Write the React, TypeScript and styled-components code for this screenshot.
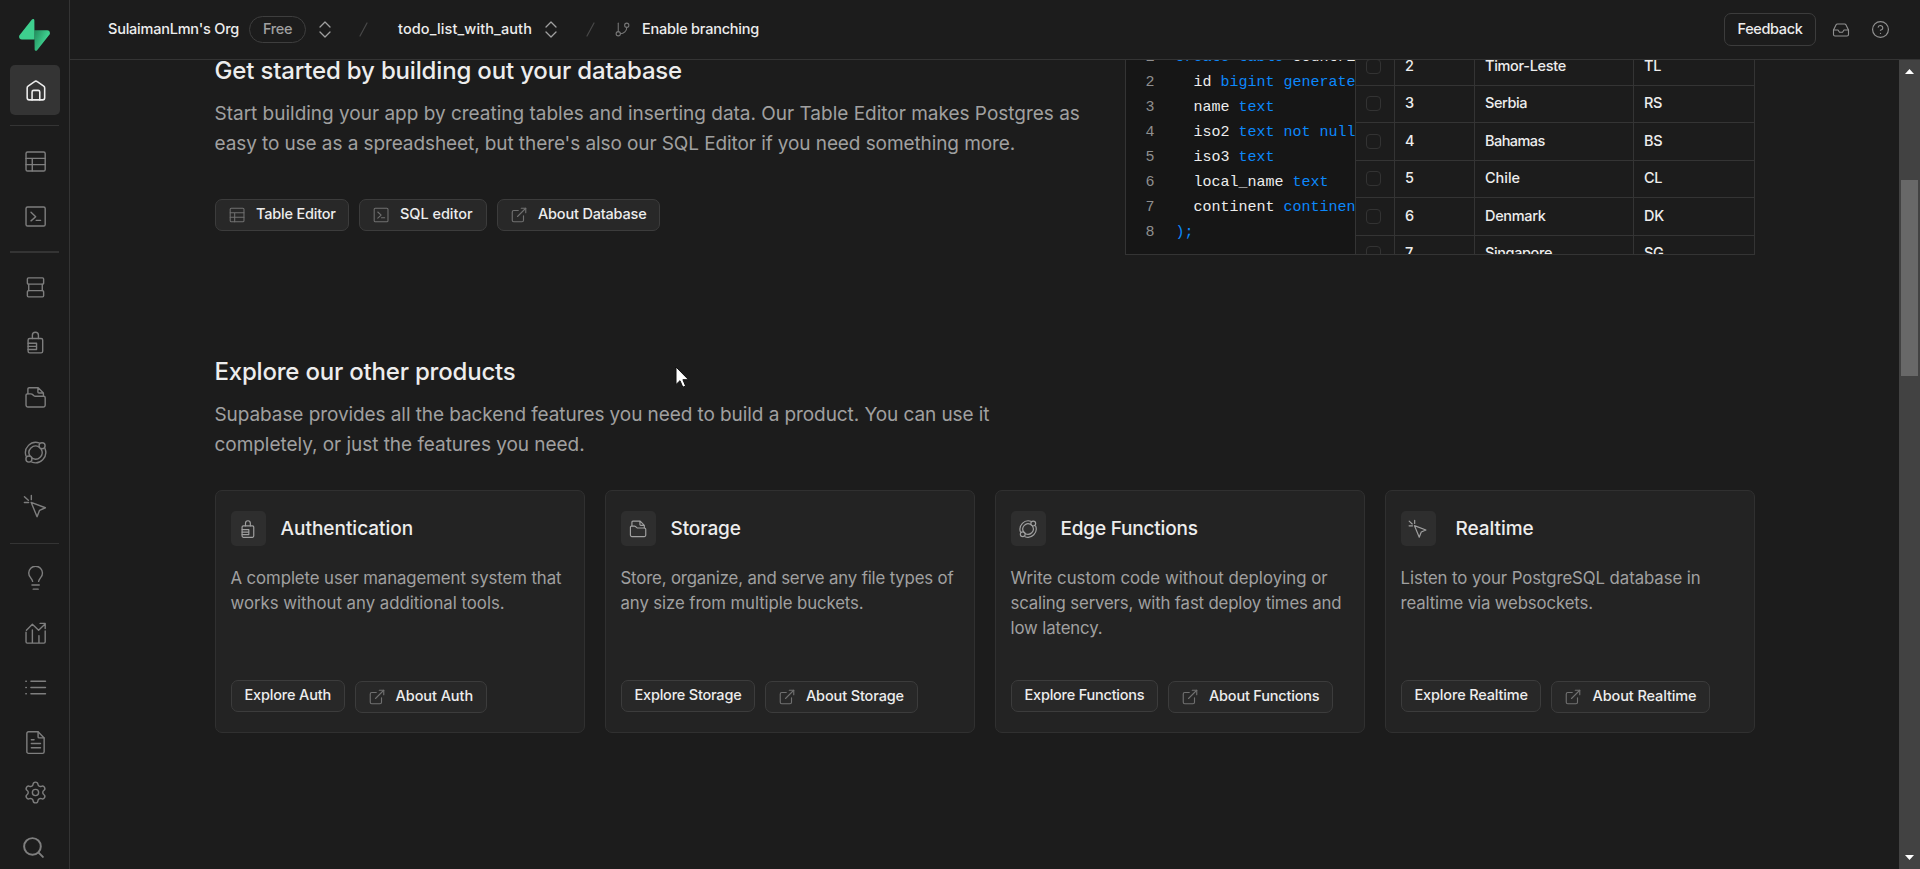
import React from 'react';
import styled, { createGlobalStyle } from 'styled-components';
import { ExternalLink, GitBranch, HelpCircle, Inbox, Search, Settings } from 'lucide-react';

const color = {
  bg: '#1c1c1c',
  panel: '#232323',
  code: '#161616',
  line: '#343434',
  soft: '#2e2e2e',
  button: '#282828',
  buttonLine: '#3c3c3c',
  text: '#ededed',
  muted: '#a0a0a0',
  icon: '#7e7e7e',
  blue: '#0c88fb',
};

const GlobalStyle = createGlobalStyle`
  * { box-sizing: border-box; }
  body {
    margin: 0;
    background: ${color.bg};
    color: ${color.text};
    font-family: Inter, "Liberation Sans", sans-serif;
    overflow: hidden;
  }
  h2, h3, p { margin: 0; }
`;

/* ---------- text ---------- */

const Label = styled.span<{ $track?: number }>`
  font-size: 14.5px;
  line-height: 20px;
  font-weight: 500;
  letter-spacing: ${(p) => p.$track ?? -0.15}px;
  white-space: nowrap;
`;

const Heading = styled.h2<{ $track: number }>`
  margin-left: -0.5px;
  font-size: 24px;
  line-height: 32px;
  font-weight: 450;
  letter-spacing: ${(p) => p.$track}px;
  white-space: nowrap;
`;

const Lead = styled.p`
  margin: 12px 0 0 -0.5px;
  font-size: 19px;
  line-height: 30px;
  color: ${color.muted};
`;

const Line = styled.span<{ $track: number }>`
  display: block;
  letter-spacing: ${(p) => p.$track}px;
  white-space: nowrap;
`;

/* ---------- icons ---------- */

const Glyph = styled.svg.attrs({
  viewBox: '0 0 24 24',
  fill: 'none',
  stroke: 'currentColor',
  strokeLinecap: 'round',
  strokeLinejoin: 'round',
})<{ $size?: number; $weight?: number }>`
  display: block;
  flex: none;
  width: ${(p) => p.$size ?? 25}px;
  height: ${(p) => p.$size ?? 25}px;
  stroke-width: ${(p) => p.$weight ?? 1.35};
`;

type IconProps = { size?: number; weight?: number };
type IconType = (p: IconProps) => React.ReactElement;

const icon = (body: React.ReactNode): IconType => ({ size, weight }) => (
  <Glyph $size={size} $weight={weight}>{body}</Glyph>
);

const HomeIcon = icon(
  <>
    <path d="M4 9.6a2.2 2.2 0 0 1 .9-1.8l6.2-4.3a2.2 2.2 0 0 1 2.6 0l6.2 4.3a2.2 2.2 0 0 1 .9 1.8V19a2 2 0 0 1-2 2H6a2 2 0 0 1-2-2Z" />
    <path d="M8.7 21v-7.6a1.5 1.5 0 0 1 1.5-1.5h4.400a1.500 1.500 0 0 1 1.500 1.500V21" />
  </>,
);
const TableIcon = icon(
  <>
    <rect x="2.9" y="2.9" width="18.4" height="18.2" rx="1.5" />
    <path d="M2.9 9h18.4M2.9 15h18.4M8.9 9v12" />
  </>,
);
const SqlIcon = icon(
  <>
    <rect x="2.9" y="2.9" width="18.4" height="18.2" rx="1.5" />
    <path d="M7.7 8l4.5 4.2-4.5 4M12.6 15.7h4.3" />
  </>,
);
const DatabaseIcon = icon(
  <>
    <rect x="4.2" y="2.8" width="15.6" height="6" rx="1" />
    <path d="M5.5 8.8v6.2M18.5 8.8v6.2" />
    <rect x="4.2" y="15" width="15.6" height="6" rx="1" />
  </>,
);
const AuthIcon = icon(
  <>
    <rect x="4.9" y="8.2" width="14" height="13.8" rx="1.5" />
    <path d="M9 8.2V5a2.9 2.9 0 0 1 5.8 0v3.2M4.9 12.700h8.100v6H4.900M4.900 15.700H13" />
  </>,
);
const StorageIcon = icon(
  <>
    <path d="M2.9 9.700a1.200 1.200 0 0 1 1.200-1.200h3.600a2 2 0 0 1 1.300.500l1.500 1.300a2 2 0 0 0 1.300.500h8a1.500 1.500 0 0 1 1.500 1.500v7a1.800 1.800 0 0 1-1.800 1.800H4.700a1.800 1.800 0 0 1-1.800-1.800Z" />
    <path d="M4.700 8.400V3.800a1.200 1.200 0 0 1 1.200-1.200h8.700l5 5v3.200M14.300 2.800v3.900a1 1 0 0 0 1 1h4" />
  </>,
);
const FunctionsIcon = icon(
  <>
    <path d="M15.500 2.700a10 10 0 0 0-12.600 12.700M8.500 21.300A10 10 0 0 0 21.200 8.400" />
    <path d="M15.300 6.700a6.300 6.300 0 0 0-8.600 8.700M8.600 17.300a6.300 6.300 0 0 0 8.800-8.600" />
    <circle cx="18.3" cy="5.5" r="2.9" />
    <circle cx="5.7" cy="18.3" r="2.9" />
  </>,
);
const RealtimeIcon = icon(
  <path d="M7.800 8l13.700 5.200-5.600 2.500-2.400 6.100ZM1.400 2.600l3.700 3.400M8 1.500v3.900M1.300 8.200h4.100" />,
);
const BulbIcon = icon(
  <path d="M9.200 14.700c-.300-1.500-.900-2.200-1.800-3.300a6.600 6.600 0 1 1 9.400 0c-.900 1.100-1.500 1.800-1.800 3.300M8.600 18.200h7M9.800 22.200h4.800" />,
);
const ReportsIcon = icon(
  <>
    <path d="M2.900 10.800V20a1.200 1.200 0 0 0 1.200 1.200h16a1.200 1.200 0 0 0 1.200-1.200V9.500M9 8.600v12.500M15.300 14v7.100" />
    <path d="M3.300 8.800L9 3.200l6 5.600 6.200-5.900M16.400 2.300h4.900v5" />
  </>,
);
const LogsIcon = icon(<path d="M7.600 6h14M7.600 12h14M7.600 18h14M2.700 6h.500M2.700 12h.500M2.700 18h.500" />);
const DocsIcon = icon(
  <>
    <path d="M14.500 1.700H5.300a1.600 1.600 0 0 0-1.600 1.600v17.500a1.600 1.600 0 0 0 1.600 1.600h13.400a1.600 1.600 0 0 0 1.600-1.600V7.600Z" />
    <path d="M14.500 1.800v4.800a1 1 0 0 0 1 1h4.700M8 9.300h2.600M8 13h8.800M8 17h8.800" />
  </>,
);

const Logo = () => (
  <svg width="31" height="32" viewBox="0 0 109 113" fill="none">
    <defs>
      <linearGradient id="leaf" x1="54" y1="55" x2="94" y2="72" gradientUnits="userSpaceOnUse">
        <stop stopColor="#249361" />
        <stop offset="1" stopColor="#3ECF8E" />
      </linearGradient>
    </defs>
    <path
      d="M63.708 110.284c-2.860 3.601-8.658 1.628-8.727-2.970l-1.007-67.251h45.220c8.190 0 12.758 9.460 7.665 15.874L63.708 110.284Z"
      fill="url(#leaf)"
    />
    <path
      d="M45.317 2.071c2.860-3.601 8.657-1.628 8.726 2.970l.442 67.251H9.831c-8.190 0-12.759-9.460-7.665-15.875L45.317 2.071Z"
      fill="#3ECF8E"
    />
  </svg>
);

/* ---------- shell ---------- */

const Shell = styled.div`
  display: flex;
  width: 1920px;
  height: 869px;
  overflow: hidden;
`;

const Sidebar = styled.nav`
  display: flex;
  flex-direction: column;
  flex: none;
  width: 70px;
  padding-left: 10px;
  border-right: 1px solid ${color.line};
`;

const LogoSlot = styled.div`
  flex: none;
  height: 65px;
  padding: 19px 0 0 9px;
`;

const NavGroup = styled.div`
  display: flex;
  flex-direction: column;
  flex: none;
  gap: 4.7px;
`;

const NavItem = styled.a<{ $active?: boolean }>`
  display: flex;
  align-items: center;
  justify-content: center;
  flex: none;
  width: 50px;
  height: 50px;
  padding-left: 1px;
  border-radius: 5px;
  color: ${(p) => (p.$active ? color.text : color.icon)};
  background: ${(p) => (p.$active ? '#343434' : 'transparent')};
`;

const SearchItem = styled(NavItem)`
  padding: 0 4px 0 0;
  margin-top: 5px;
`;

const Divider = styled.div<{ $thick?: boolean; $top: number; $bottom: number }>`
  flex: none;
  width: 49px;
  height: ${(p) => (p.$thick ? 2 : 1)}px;
  margin: ${(p) => p.$top}px 0 ${(p) => p.$bottom}px;
  background: ${color.line};
`;

const Page = styled.div`
  display: flex;
  flex-direction: column;
  flex: 1;
  min-width: 0;
`;

const Header = styled.header`
  display: flex;
  align-items: center;
  flex: none;
  height: 60px;
  padding: 0 30px 1px 38px;
  border-bottom: 1px solid ${color.line};
`;

const Crumb = styled.div<{ $width: number }>`
  display: flex;
  align-items: center;
  flex: none;
  width: ${(p) => p.$width}px;
`;

const PlanBadge = styled.span`
  display: flex;
  align-items: center;
  justify-content: center;
  width: 57px;
  height: 27px;
  margin: 0 13px 0 10px;
  padding-bottom: 1px;
  border: 1px solid #3e3e3e;
  border-radius: 14px;
  color: ${color.muted};
`;

const Switcher = styled.svg`
  flex: none;
  width: 12px;
  height: 17px;
  margin-top: 1px;
  fill: none;
  stroke: #a0a0a0;
  stroke-width: 1.3;
  stroke-linecap: round;
  stroke-linejoin: round;
`;

const Slash = styled.svg<{ $after: number }>`
  flex: none;
  width: 9px;
  height: 15px;
  margin: 1px ${(p) => p.$after}px 0 0;
  stroke: #484848;
  stroke-width: 1.2;
  stroke-linecap: round;
`;

const ProjectLabel = styled(Label)`
  margin-right: 13px;
`;

const Branching = styled.div`
  display: flex;
  align-items: center;
  gap: 11px;
  svg { color: #777; }
`;

const Actions = styled.div`
  display: flex;
  align-items: center;
  gap: 15px;
  margin-left: auto;
  color: #909090;
`;

const Feedback = styled.button`
  width: 92px;
  height: 33px;
  padding: 0;
  border: 1px solid #3c3c3c;
  border-radius: 7px;
  background: transparent;
  color: ${color.text};
  font-family: inherit;
`;

const IconSlot = styled.span`
  display: flex;
  justify-content: center;
  width: 19px;
  margin-right: 6px;
  padding-top: 1px;
  &:last-child { margin-right: 0; }
`;

const Body = styled.div`
  display: flex;
  flex: 1;
  min-height: 0;
`;

const Scroller = styled.main`
  flex: 1;
  overflow: hidden;
  padding-left: 145px;
`;

const ScrollTrack = styled.div`
  display: flex;
  flex-direction: column;
  align-items: center;
  flex: none;
  width: 21px;
  padding: 9px 0;
  background: #424242;
`;

const ScrollThumb = styled.div`
  width: 17px;
  height: 196px;
  margin: 106px 0 auto;
  background: #686868;
`;

const Arrow = styled.svg`
  width: 9px;
  height: 5px;
  fill: #fff;
`;

/* ---------- database section ---------- */

const Intro = styled.section`
  display: flex;
  justify-content: space-between;
  width: 1540px;
  height: 195px;
`;

const IntroText = styled.div`
  & > h2 { margin-top: -5px; }
`;

const ButtonRow = styled.div<{ $top?: number }>`
  display: flex;
  gap: 10px;
  margin-top: ${(p) => p.$top ?? 0}px;
`;

const Button = styled.button<{ $drop?: number; $width?: number }>`
  display: flex;
  align-items: center;
  gap: 10px;
  width: ${(p) => (p.$width ? `${p.$width}px` : 'auto')};
  height: 32px;
  margin-top: ${(p) => p.$drop ?? 0}px;
  padding: 0 12.5px 2px;
  border: 1px solid ${color.buttonLine};
  border-radius: 7px;
  background: ${color.button};
  color: ${color.text};
  font-family: inherit;
  svg {
    flex: none;
    margin: 2px 0 0 -0.5px;
    color: #707070;
  }
`;

const Preview = styled.div`
  display: flex;
  width: 630px;
  border: 1px solid ${color.line};
  border-top: 0;
  overflow: hidden;
`;

const Code = styled.pre`
  flex: none;
  width: 229px;
  margin: -15px 0 0;
  padding-left: 19.5px;
  overflow: hidden;
  background: ${color.code};
  font: 15px/25px "Liberation Mono", monospace;
`;

const CodeLine = styled.div`
  display: flex;
  height: 25px;
`;

const LineNo = styled.span`
  flex: none;
  width: 30px;
  color: #8f8f8f;
`;

const Keyword = styled.span`
  color: ${color.blue};
`;

const Grid = styled.div`
  display: grid;
  grid-template-columns: 39px 80px 159px 121px;
  grid-auto-rows: 37.5px;
  flex: 1;
  margin-top: -12px;
  border-left: 1px solid ${color.line};
`;

const Cell = styled.div<{ $last?: boolean }>`
  display: flex;
  align-items: center;
  padding: 0 0 1px 10px;
  border-right: ${(p) => (p.$last ? '0' : `1px solid ${color.line}`)};
  border-bottom: 1px solid ${color.line};
`;

const Checkbox = styled.i`
  width: 15px;
  height: 15px;
  margin-top: 1px;
  border: 1px solid #333;
  border-radius: 4px;
`;

/* ---------- products section ---------- */

const Products = styled.section`
  margin-top: 101px;
`;

const CardRow = styled.div`
  display: grid;
  grid-template-columns: repeat(4, 370px);
  gap: 20px;
  margin-top: 30px;
`;

const Card = styled.article`
  display: flex;
  flex-direction: column;
  height: 243px;
  padding: 20px 15px 19px;
  border: 1px solid #303030;
  border-radius: 7px;
  background: ${color.panel};
`;

const CardHead = styled.div<{ $gap: number }>`
  display: flex;
  align-items: center;
  gap: ${(p) => p.$gap}px;
  height: 35px;
`;

const IconTile = styled.span`
  display: flex;
  align-items: center;
  justify-content: center;
  width: 35px;
  height: 35px;
  padding-right: 1px;
  border-radius: 5px;
  background: ${color.soft};
  color: #a0a0a0;
`;

const CardTitle = styled.h3<{ $track: number }>`
  padding-top: 1px;
  margin-left: -0.5px;
  font-size: 19px;
  line-height: 28px;
  font-weight: 500;
  letter-spacing: ${(p) => p.$track}px;
`;

const CardText = styled.p`
  flex: 1;
  margin: 20px 0 0 -0.5px;
  font-size: 16.8px;
  line-height: 25px;
  color: ${color.muted};
`;

const Pointer = styled.svg`
  position: absolute;
  left: 675px;
  top: 366px;
  width: 15px;
  height: 23px;
`;

/* ---------- data ---------- */

const code: [string, string][] = [
  ['', 'create table |countries ('],
  ['  id ', 'bigint generated by default'],
  ['  name ', 'text'],
  ['  iso2 ', 'text not null,'],
  ['  iso3 ', 'text'],
  ['  local_name ', 'text'],
  ['  continent ', 'continents'],
  ['', ');'],
];

const countries: [string, string, string, number][] = [
  ['2', 'Timor-Leste', 'TL', -0.3],
  ['3', 'Serbia', 'RS', -0.4],
  ['4', 'Bahamas', 'BS', -0.55],
  ['5', 'Chile', 'CL', -0.04],
  ['6', 'Denmark', 'DK', -0.32],
  ['7', 'Singapore', 'SG', -0.39],
];

type Product = {
  title: string;
  track: number;
  gap?: number;
  Icon: IconType;
  lines: [string, number][];
  explore: [string, number];
  about: [string, number];
};

const products: Product[] = [
  {
    title: 'Authentication',
    track: 0,
    Icon: AuthIcon,
    lines: [
      ['A complete user management system that', -0.09],
      ['works without any additional tools.', -0.01],
    ],
    explore: ['Explore Auth', -0.17],
    about: ['About Auth', -0.07],
  },
  {
    title: 'Storage',
    track: -0.1,
    Icon: StorageIcon,
    lines: [
      ['Store, organize, and serve any file types of', -0.16],
      ['any size from multiple buckets.', -0.1],
    ],
    explore: ['Explore Storage', -0.21],
    about: ['About Storage', -0.13],
  },
  {
    title: 'Edge Functions',
    track: -0.2,
    Icon: FunctionsIcon,
    lines: [
      ['Write custom code without deploying or', 0.02],
      ['scaling servers, with fast deploy times and', -0.16],
      ['low latency.', -0.13],
    ],
    explore: ['Explore Functions', -0.22],
    about: ['About Functions', -0.18],
  },
  {
    title: 'Realtime',
    track: -0.05,
    gap: 20,
    Icon: RealtimeIcon,
    lines: [
      ['Listen to your PostgreSQL database in', -0.08],
      ['realtime via websockets.', -0.14],
    ],
    explore: ['Explore Realtime', -0.15],
    about: ['About Realtime', -0.1],
  },
];

/* ---------- parts ---------- */

const UpDown = () => (
  <Switcher viewBox="0 0 12 17">
    <path d="M1 6L6 1l5 5M1 11l5 5 5-5" />
  </Switcher>
);

const SlashMark = ({ after }: { after: number }) => (
  <Slash viewBox="0 0 9 15" $after={after}>
    <path d="M8 1L1 14" />
  </Slash>
);

const NavList = ({ icons }: { icons: IconType[] }) => (
  <NavGroup>
    {icons.map((Icon, i) => (
      <NavItem key={i}>
        <Icon />
      </NavItem>
    ))}
  </NavGroup>
);

const CodeText = ({ value }: { value: string }) => {
  const [keyword, rest] = value.split('|');
  return (
    <>
      <Keyword>{keyword}</Keyword>
      {rest}
    </>
  );
};

export default function App() {
  return (
    <Shell>
      <GlobalStyle />
      <Sidebar>
        <LogoSlot>
          <Logo />
        </LogoSlot>
        <NavItem $active>
          <HomeIcon weight={1.5} />
        </NavItem>
        <Divider $top={10} $bottom={10.5} />
        <NavList icons={[TableIcon, SqlIcon]} />
        <Divider $thick $top={9.800} $bottom={10} />
        <NavList icons={[DatabaseIcon, AuthIcon, StorageIcon, FunctionsIcon, RealtimeIcon]} />
        <Divider $top={11.2} $bottom={9.5} />
        <NavList icons={[BulbIcon, ReportsIcon, LogsIcon, DocsIcon]} />
        <NavItem>
          <Settings size={25} strokeWidth={1.35} />
        </NavItem>
        <SearchItem>
          <Search size={25} strokeWidth={1.9} />
        </SearchItem>
      </Sidebar>

      <Page>
        <Header>
          <Crumb $width={251}>
            <Label $track={-0.22}>SulaimanLmn's Org</Label>
            <PlanBadge>
              <Label $track={-0.3}>Free</Label>
            </PlanBadge>
            <UpDown />
          </Crumb>
          <SlashMark after={30} />
          <Crumb $width={188}>
            <ProjectLabel $track={0.11}>todo_list_with_auth</ProjectLabel>
            <UpDown />
          </Crumb>
          <SlashMark after={19} />
          <Branching>
            <GitBranch size={17} strokeWidth={1.5} />
            <Label $track={-0.23}>Enable branching</Label>
          </Branching>
          <Actions>
            <Feedback>
              <Label $track={-0.35}>Feedback</Label>
            </Feedback>
            <IconSlot>
              <Inbox size={18} strokeWidth={1.5} />
            </IconSlot>
            <IconSlot>
              <HelpCircle size={19} strokeWidth={1.5} />
            </IconSlot>
          </Actions>
        </Header>

        <Body>
          <Scroller>
            <Intro>
              <IntroText>
                <Heading $track={-0.17}>Get started by building out your database</Heading>
                <Lead>
                  <Line $track={-0.01}>
                    Start building your app by creating tables and inserting data. Our Table Editor makes Postgres as
                  </Line>
                  <Line $track={-0.09}>
                    easy to use as a spreadsheet, but there's also our SQL Editor if you need something more.
                  </Line>
                </Lead>
                <ButtonRow $top={40}>
                  <Button $width={134}>
                    <TableIcon size={18} weight={1.4} />
                    <Label $track={-0.2}>Table Editor</Label>
                  </Button>
                  <Button $width={128}>
                    <SqlIcon size={18} weight={1.4} />
                    <Label $track={-0.04}>SQL editor</Label>
                  </Button>
                  <Button $width={163}>
                    <ExternalLink size={18} strokeWidth={1.5} />
                    <Label $track={-0.19}>About Database</Label>
                  </Button>
                </ButtonRow>
              </IntroText>
              <Preview>
                <Code>
                  {code.map(([name, rest], i) => (
                    <CodeLine key={i}>
                      <LineNo>{i + 1}</LineNo>
                      <span>
                        {name}
                        <CodeText value={rest} />
                      </span>
                    </CodeLine>
                  ))}
                </Code>
                <Grid>
                  {countries.map(([id, name, iso, track]) => (
                    <React.Fragment key={id}>
                      <Cell>
                        <Checkbox />
                      </Cell>
                      <Cell>
                        <Label>{id}</Label>
                      </Cell>
                      <Cell>
                        <Label $track={track}>{name}</Label>
                      </Cell>
                      <Cell $last>
                        <Label $track={-0.33}>{iso}</Label>
                      </Cell>
                    </React.Fragment>
                  ))}
                </Grid>
              </Preview>
            </Intro>

            <Products>
              <Heading $track={-0.2}>Explore our other products</Heading>
              <Lead>
                <Line $track={-0.08}>
                  Supabase provides all the backend features you need to build a product. You can use it
                </Line>
                <Line $track={-0.04}>completely, or just the features you need.</Line>
              </Lead>
              <CardRow>
                {products.map(({ title, track, gap, Icon, lines, explore, about }) => (
                  <Card key={title}>
                    <CardHead $gap={gap ?? 15}>
                      <IconTile>
                        <Icon size={20} weight={1.4} />
                      </IconTile>
                      <CardTitle $track={track}>{title}</CardTitle>
                    </CardHead>
                    <CardText>
                      {lines.map(([text, t]) => (
                        <Line key={text} $track={t}>
                          {text}
                        </Line>
                      ))}
                    </CardText>
                    <ButtonRow>
                      <Button>
                        <Label $track={explore[1]}>{explore[0]}</Label>
                      </Button>
                      <Button $drop={1}>
                        <ExternalLink size={18} strokeWidth={1.5} />
                        <Label $track={about[1]}>{about[0]}</Label>
                      </Button>
                    </ButtonRow>
                  </Card>
                ))}
              </CardRow>
            </Products>
          </Scroller>
          <ScrollTrack>
            <Arrow viewBox="0 0 9 5">
              <path d="M4.5 0L9 5H0Z" />
            </Arrow>
            <ScrollThumb />
            <Arrow viewBox="0 0 9 5">
              <path d="M0 0h9L4.5 5Z" />
            </Arrow>
          </ScrollTrack>
        </Body>
      </Page>

      <Pointer viewBox="0 0 15 23">
        <path
          d="M1 1v17.5l4-3.8 2.8 6.500 2.800-1.200-2.700-6.300h5.600Z"
          fill="#fff"
          stroke="#111"
          strokeWidth="1"
        />
      </Pointer>
    </Shell>
  );
}
